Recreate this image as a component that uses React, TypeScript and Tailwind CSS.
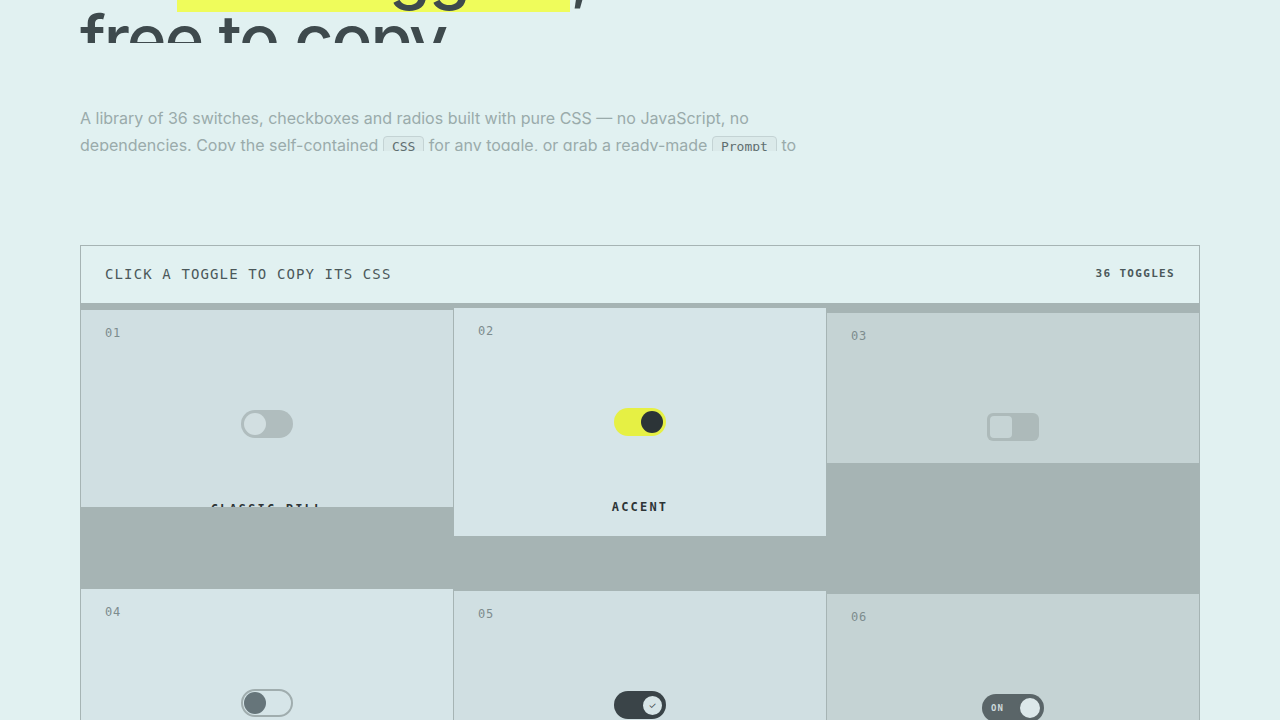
import React from 'react';

const mono = { fontFamily: '"DejaVu Sans Mono", "Liberation Mono", monospace' };

type Card = {
  no: string;
  label: string;
  bg: string;
  top: string;
  height: string;
  toggle: React.ReactNode;
};

function ClassicPill() {
  return (
    <div className="flex h-[28px] w-[52px] items-center rounded-full bg-[#b0bdbe] px-[3px]">
      <div className="h-[22px] w-[22px] rounded-full bg-[#d2dfe1]" />
    </div>
  );
}

function AccentPill() {
  return (
    <div className="flex h-[28px] w-[52px] items-center justify-end rounded-full bg-[#e6f044] px-[3px]">
      <div className="h-[22px] w-[22px] rounded-full bg-[#2c3437]" />
    </div>
  );
}

function SquareSwitch() {
  return (
    <div className="flex h-[28px] w-[52px] items-center rounded-[6px] bg-[#adbaba] px-[3px]">
      <div className="h-[22px] w-[22px] rounded-[4px] bg-[#c6d4d5]" />
    </div>
  );
}

function OutlinePill() {
  return (
    <div className="flex h-[28px] w-[52px] items-center rounded-full border-2 border-[#a0adae] px-[1px]">
      <div className="h-[22px] w-[22px] rounded-full bg-[#66757a]" />
    </div>
  );
}

function CheckPill() {
  return (
    <div className="flex h-[28px] w-[52px] items-center justify-end rounded-full bg-[#3a4448] px-[2px]">
      <div className="flex h-[23px] w-[23px] items-center justify-center rounded-full border-2 border-[#3a4448] bg-[#d7e5e7] text-[9px] leading-none text-[#3a4448]">
        ✓
      </div>
    </div>
  );
}

function LabelPill() {
  return (
    <div className="flex h-[28px] w-[62px] items-center justify-between rounded-full bg-[#5a6568] pl-[9px] pr-[2px]">
      <span className="text-[9px] font-bold leading-none tracking-[0.12em] text-[#cdd9db]" style={mono}>
        ON
      </span>
      <div className="h-[24px] w-[24px] rounded-full border-2 border-[#5a6568] bg-[#dce8ea]" />
    </div>
  );
}

const rowOne: Card[] = [
  { no: '01', label: 'CLASSIC PILL', bg: 'bg-[#d0dfe2]', top: 'mt-[7px]', height: 'h-[197px]', toggle: <ClassicPill /> },
  { no: '02', label: 'ACCENT', bg: 'bg-[#d6e5e8]', top: 'mt-[5px]', height: 'h-[228px]', toggle: <AccentPill /> },
  { no: '03', label: 'SQUARE', bg: 'bg-[#c5d3d4]', top: 'mt-[10px]', height: 'h-[150px]', toggle: <SquareSwitch /> },
];

const rowTwo: Card[] = [
  { no: '04', label: 'OUTLINE', bg: 'bg-[#d6e5e8]', top: 'mt-[1px]', height: 'h-[228px]', toggle: <OutlinePill /> },
  { no: '05', label: 'CHECKMARK', bg: 'bg-[#d0dfe2]', top: 'mt-[3px]', height: 'h-[228px]', toggle: <CheckPill /> },
  { no: '06', label: 'ON LABEL', bg: 'bg-[#c5d3d4]', top: 'mt-[6px]', height: 'h-[228px]', toggle: <LabelPill /> },
];

function ToggleCard({ card }: { card: Card }) {
  return (
    <div className="h-[284px] bg-[#a6b4b4]">
      <div className={`${card.top} ${card.height} ${card.bg} overflow-hidden`}>
        <div className="flex h-[228px] flex-col px-6 pt-[15px]">
          <div className="text-[12px] leading-4 tracking-[0.06em] text-[#7d8c8e]" style={mono}>
            {card.no}
          </div>
          <div className="mt-[8px] flex h-[150px] items-center justify-center">{card.toggle}</div>
          <div
            className="mt-[2px] text-center text-[12px] font-bold leading-4 tracking-[0.18em] text-[#2d3436]"
            style={mono}
          >
            {card.label}
          </div>
        </div>
      </div>
    </div>
  );
}

function Chip({ children }: { children: React.ReactNode }) {
  return (
    <span
      className="inline-block rounded-[4px] border border-[#c4d3d4] bg-[#dbeaea] px-[8px] align-middle text-[13px] leading-[20px] text-[#5f6e70]"
      style={mono}
    >
      {children}
    </span>
  );
}

export default function App() {
  return (
    <div className="min-h-[720px] overflow-hidden bg-[#e1f1f1]" style={{ fontFamily: 'Inter, "Noto Sans", sans-serif' }}>
      <div className="px-20">
        <h1 className="-mt-[63px] text-[68px] font-medium leading-[68px] tracking-[-0.03em] text-[#3e4a4d]">
          <div className="whitespace-nowrap">
            36 <span className="bg-[#effc5b] pl-[4px] pr-[14px]">CSS toggles</span>,
          </div>
          <div className="h-[38px] overflow-hidden whitespace-nowrap">free to copy</div>
        </h1>

        <p className="mt-[62px] h-[46px] max-w-[760px] overflow-hidden text-[16px] leading-[27px] text-[#9aabab]">
          A library of 36 switches, checkboxes and radios built with pure CSS — no JavaScript, no
          dependencies. Copy the self-contained <Chip>CSS</Chip> for any toggle, or grab a ready-made{' '}
          <Chip>Prompt</Chip> to recreate it with your favourite assistant.
        </p>

        <section className="mt-[94px] border border-[#a6b4b4]">
          <header className="flex h-[57px] items-center justify-between px-6">
            <span className="text-[14px] tracking-[0.08em] text-[#4b585a]" style={mono}>
              CLICK A TOGGLE TO COPY ITS CSS
            </span>
            <span className="text-[11px] font-bold tracking-[0.12em] text-[#4b585a]" style={mono}>
              36 TOGGLES
            </span>
          </header>
          <div className="grid grid-cols-3 gap-px bg-[#a6b4b4]">
            {[...rowOne, ...rowTwo].map((card) => (
              <ToggleCard key={card.no} card={card} />
            ))}
          </div>
        </section>
      </div>
    </div>
  );
}
